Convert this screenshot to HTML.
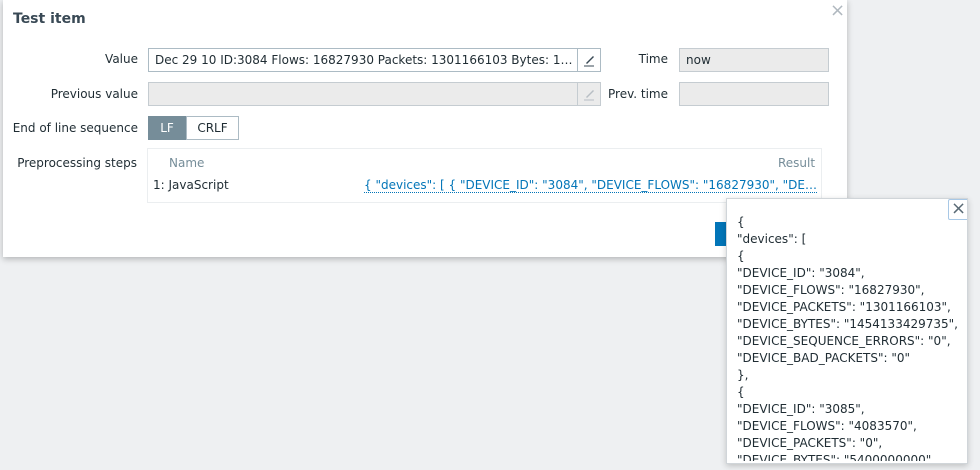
<!DOCTYPE html>
<html><head><meta charset="utf-8"><style>
*{box-sizing:border-box;margin:0;padding:0}
body{width:980px;height:470px;overflow:hidden;background:#eef0f2;font-family:"DejaVu Sans","Liberation Sans",sans-serif;font-size:12px;color:#1f2c33;position:relative}
.a{position:absolute;white-space:nowrap}
.dlg{position:absolute;left:3px;top:0;width:844px;height:257px;background:#fff;box-shadow:0 2px 6px rgba(0,0,0,.25)}
.lbl{position:absolute;text-align:right;white-space:nowrap}
.in{position:absolute;height:24px;border:1px solid #c5ccd1;background:#ebebeb;line-height:22px;padding-left:6px;white-space:nowrap;overflow:hidden}
</style></head><body>
<div class="dlg">
<div class="a" style="left:10px;top:11px;font-size:14px;font-weight:bold;color:#394955">Test item</div>
<div class="a" style="left:827px;top:0px;font-size:18px;color:#b0b8bf">×</div>
<div class="lbl" style="right:709px;top:52px">Value</div>
<div class="in" style="left:145px;top:48px;width:453px;background:#fff;border-color:#acbbc4;color:#1f2c33">Dec 29 10 ID:3084 Flows: 16827930 Packets: 1301166103 Bytes: 1…</div>
<div class="a" style="left:574px;top:48px;width:24px;height:24px;border:1px solid #acbbc4;background:#fff"><svg width="22" height="22"><path d="M8 14 L15 7 L16 8 L9 15 Z" fill="#394955"/><path d="M6 17 H16" stroke="#394955" stroke-width="1"/></svg></div>
<div class="lbl" style="right:179px;top:52px">Time</div>
<div class="in" style="left:676px;top:48px;width:150px;color:#1f2c33">now</div>
<div class="lbl" style="right:709px;top:87px">Previous value</div>
<div class="in" style="left:145px;top:82px;width:453px"></div>
<div class="a" style="left:574px;top:82px;width:24px;height:24px;border:1px solid #c5ccd1;background:#ebebeb"><svg width="22" height="22"><path d="M8 14 L15 7 L16 8 L9 15 Z" fill="#b7bec4"/><path d="M6 17 H16" stroke="#b7bec4" stroke-width="1"/></svg></div>
<div class="lbl" style="right:179px;top:87px">Prev. time</div>
<div class="in" style="left:676px;top:82px;width:150px"></div>
<div class="lbl" style="right:709px;top:121px">End of line sequence</div>
<div class="a" style="left:145px;top:116px;width:38px;height:24px;background:#768d99;color:#fff;text-align:center;line-height:24px">LF</div>
<div class="a" style="left:183px;top:116px;width:53px;height:24px;border:1px solid #acbbc4;text-align:center;line-height:22px">CRLF</div>
<div class="lbl" style="right:710px;top:156px">Preprocessing steps</div>
<div class="a" style="left:144px;top:148px;width:675px;height:55px;border:1px solid #ebeef0"></div>
<div class="a" style="left:166px;top:156px;color:#768d99">Name</div>
<div class="a" style="left:775px;top:156px;color:#768d99">Result</div>
<div class="a" style="left:150px;top:178px">1: JavaScript</div>
<div class="a" style="left:361px;top:178px;color:#0275b8;border-bottom:1px dotted #0275b8;line-height:14px">{ "devices": [ { "DEVICE_ID": "3084", "DEVICE_FLOWS": "16827930", "DE…</div>
<div class="a" style="left:712px;top:222px;width:20px;height:24px;background:#0275b8"></div>
</div>
<div class="a" style="left:726px;top:198px;width:242px;height:266px;background:#fff;border:1px solid #d0d5d9;box-shadow:0 2px 6px rgba(0,0,0,.2);overflow:hidden">
<div class="a" style="left:221px;top:0px;width:21px;height:21px;border:1px solid #a8c8e6;border-radius:2px;text-align:center;line-height:18px;font-size:18px;color:#5a6a75">×</div>
<div class="a" style="left:10px;top:15px;line-height:17px;height:247px;overflow:hidden">{<br>"devices": [<br>{<br>"DEVICE_ID": "3084",<br>"DEVICE_FLOWS": "16827930",<br>"DEVICE_PACKETS": "1301166103",<br>"DEVICE_BYTES": "1454133429735",<br>"DEVICE_SEQUENCE_ERRORS": "0",<br>"DEVICE_BAD_PACKETS": "0"<br>},<br>{<br>"DEVICE_ID": "3085",<br>"DEVICE_FLOWS": "4083570",<br>"DEVICE_PACKETS": "0",<br>"DEVICE_BYTES": "5400000000"</div>
</div>
</body></html>
